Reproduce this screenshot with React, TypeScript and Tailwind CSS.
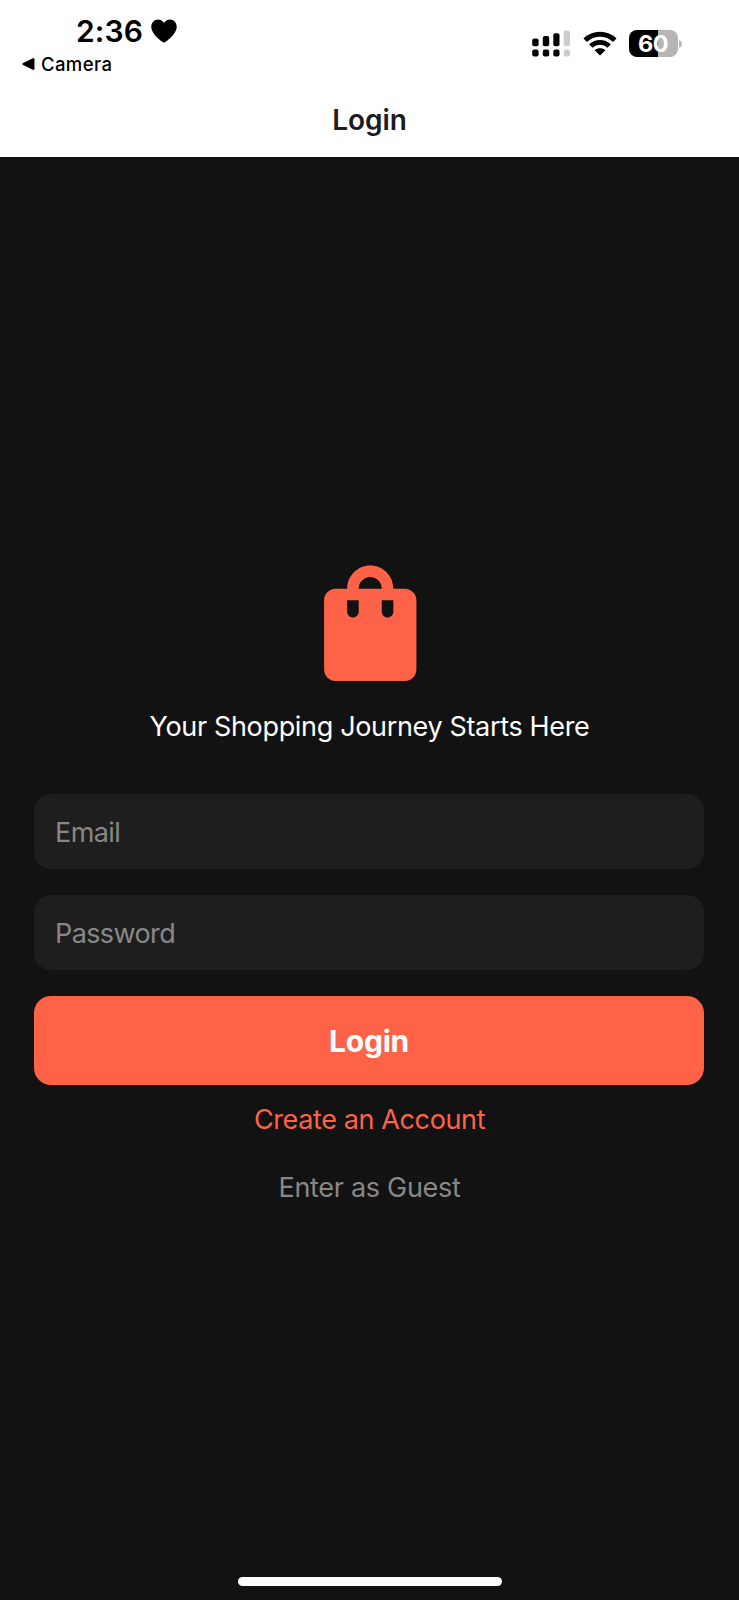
import React from "react";

function Heart() {
  return (
    <svg className="ml-[8px] h-6 w-[26px]" viewBox="0 0 26 24">
      <path d="M13 23.6C11.6 23.6 0.3 15.5 0.3 7.8C0.3 3.5 3.2 0.4 7 0.4C9.7 0.4 11.8 1.7 13 4C14.2 1.7 16.3 0.4 19 0.4C22.8 0.4 25.7 3.5 25.7 7.8C25.7 15.5 14.4 23.6 13 23.6Z" />
    </svg>
  );
}

function Signal() {
  return (
    <svg className="h-[27px] w-[39px]" viewBox="0 0 39 27">
      <rect x="0.2" y="8.6" width="6.4" height="7.6" rx="2" />
      <rect x="10.8" y="6" width="6.4" height="10.2" rx="2" />
      <rect x="21.3" y="3.2" width="6.2" height="13" rx="2" />
      <rect x="31.7" y="0.5" width="6.3" height="15.7" rx="2" fill="#cccccc" />
      <rect x="0.2" y="19.6" width="6.4" height="6.9" rx="2" />
      <rect x="10.8" y="19.6" width="6.4" height="6.9" rx="2" />
      <rect x="21.3" y="19.6" width="6.2" height="6.9" rx="2" />
      <rect x="31.7" y="19.6" width="6.3" height="6.9" rx="2" fill="#cccccc" />
    </svg>
  );
}

function Wifi() {
  return (
    <svg className="ml-[11.5px] h-[25px] w-[34px]" viewBox="0 0 34 25">
      <path d="M2.2 9.2C10.5 1.2 23.5 1.2 31.8 9.2" fill="none" stroke="black" strokeWidth="5" />
      <path d="M7.8 15C13 10.1 21 10.1 26.2 15" fill="none" stroke="black" strokeWidth="4.8" />
      <path d="M17 24.6L11.6 19.2C14.6 16.7 19.4 16.7 22.4 19.2Z" />
    </svg>
  );
}

function Battery() {
  return (
    <div className="ml-[12px] flex items-center">
      <div className="flex h-[27px] w-[49px] items-center justify-center rounded-[8px] bg-[linear-gradient(to_right,#000_60%,#b5b5b5_60%)]">
        <span className="text-[23.5px] leading-none font-bold tracking-[-0.5px] text-white">60</span>
      </div>
      <svg className="ml-[1.5px] h-2 w-[3px]" viewBox="0 0 3 8">
        <path d="M0 0.2C3.9 1.3 3.9 6.7 0 7.8Z" fill="#b5b5b5" />
      </svg>
    </div>
  );
}

function StatusBar() {
  return (
    <div className="flex h-[82px] justify-between pr-[57px] text-black">
      <div>
        <div className="mt-[15px] ml-[76px] flex h-8 items-center">
          <span className="text-[30px] leading-8 font-semibold tracking-[0.1px]">2:36</span>
          <Heart />
        </div>
        <div className="mt-[5px] ml-[21.5px] flex h-6 items-center">
          <svg className="h-3 w-[13px]" viewBox="0 0 13 12">
            <path d="M12.5 1.2V10.8C12.5 11.8 11.7 12.1 10.9 11.7L1.1 7C0.2 6.5 0.2 5.5 1.1 5L10.9 0.3C11.7 -0.1 12.5 0.2 12.5 1.2Z" />
          </svg>
          <span className="ml-[6.5px] text-[18.5px] leading-6 font-medium tracking-[0.4px]">Camera</span>
        </div>
      </div>
      <div className="mt-[30px] flex h-[27px] items-center">
        <Signal />
        <Wifi />
        <Battery />
      </div>
    </div>
  );
}

const fieldClass =
  "block h-[75px] w-full rounded-[17px] bg-[#1e1e1e] px-[21px] pt-px text-[27px] tracking-[-0.6px] text-white outline-none placeholder:text-[#888888]";

export default function App() {
  return (
    <div className="flex h-[1600px] w-[739px] flex-col bg-[#121212] font-['Inter',sans-serif]">
      <header className="h-[157px] shrink-0 bg-white">
        <StatusBar />
        <h1 className="mt-[18px] text-center text-[28px] leading-10 font-semibold tracking-[-0.1px] text-[#1c1c1e]">Login</h1>
      </header>
      <main className="flex flex-1 flex-col items-center px-[34.5px] pt-[396.5px]">
        <svg className="ml-px h-[138.5px] w-[138.5px]" viewBox="0 0 24 24" fill="#ff6347">
          <path d="M18 6h-2c0-2.21-1.79-4-4-4S8 3.79 8 6H6c-1.1 0-2 .9-2 2v12c0 1.1.9 2 2 2h12c1.1 0 2-.9 2-2V8c0-1.1-.9-2-2-2zm-8 4c0 .55-.45 1-1 1s-1-.45-1-1V8h2v2zm2-6c1.1 0 2 .9 2 2h-4c0-1.1.9-2 2-2zm4 6c0 .55-.45 1-1 1s-1-.45-1-1V8h2v2z" />
        </svg>
        <p className="mt-[15px] text-[27px] leading-10 tracking-[-0.34px] whitespace-nowrap text-white">
          Your Shopping Journey Starts Here
        </p>
        <form className="mt-[47px] mr-px w-[670px] shrink-0" onSubmit={(e) => e.preventDefault()}>
          <input className={fieldClass} type="email" placeholder="Email" />
          <input className={fieldClass + " mt-[26px]"} type="password" placeholder="Password" />
          <button className="mt-[26px] block h-[89px] w-full rounded-[17px] bg-[#ff6347] pt-px text-[30px] font-bold tracking-[-0.2px] text-white">
            Login
          </button>
        </form>
        <a className="mt-[14.5px] text-[27px] leading-10 tracking-[-0.38px] text-[#ff6347]">Create an Account</a>
        <a className="mt-[28px] text-[27px] leading-10 tracking-[-0.3px] text-[#888888]">Enter as Guest</a>
      </main>
      <div className="mb-[14px] h-[9px] w-[264px] shrink-0 self-center rounded-full bg-white" />
    </div>
  );
}
